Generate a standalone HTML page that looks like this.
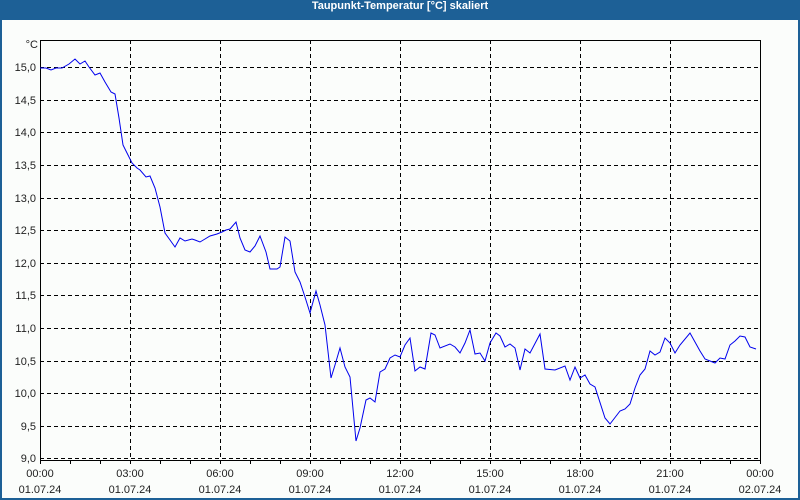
<!DOCTYPE html>
<html><head><meta charset="utf-8"><style>
html,body{margin:0;padding:0;width:800px;height:500px;overflow:hidden;background:#1d6096}
#f{position:absolute;left:2px;top:20px;width:796px;height:478px;background:#fbfdfb}
#t{position:absolute;left:0;top:0;width:800px;height:20px;line-height:18px;text-align:center;color:#fff;font:bold 11px "Liberation Sans",sans-serif}
svg{position:absolute;left:0;top:0}
text{font-family:"Liberation Sans",sans-serif;font-size:11px;fill:#222}
</style></head><body>
<div id="t">Taupunkt-Temperatur [°C] skaliert</div>
<div id="f"></div>
<svg width="800" height="500" viewBox="0 0 800 500">
<g stroke="#000" stroke-dasharray="4,3" stroke-width="1" shape-rendering="crispEdges">
<line x1="40" x2="760" y1="67.5" y2="67.5"/><line x1="40" x2="760" y1="100.5" y2="100.5"/>
<line x1="40" x2="760" y1="132.5" y2="132.5"/><line x1="40" x2="760" y1="165.5" y2="165.5"/>
<line x1="40" x2="760" y1="198.5" y2="198.5"/><line x1="40" x2="760" y1="230.5" y2="230.5"/>
<line x1="40" x2="760" y1="263.5" y2="263.5"/><line x1="40" x2="760" y1="295.5" y2="295.5"/>
<line x1="40" x2="760" y1="328.5" y2="328.5"/><line x1="40" x2="760" y1="361.5" y2="361.5"/>
<line x1="40" x2="760" y1="393.5" y2="393.5"/><line x1="40" x2="760" y1="426.5" y2="426.5"/>
<line x1="40" x2="760" y1="458.5" y2="458.5"/>
<line y1="40" y2="460" x1="130.5" x2="130.5"/><line y1="40" y2="460" x1="220.5" x2="220.5"/>
<line y1="40" y2="460" x1="310.5" x2="310.5"/><line y1="40" y2="460" x1="400.5" x2="400.5"/>
<line y1="40" y2="460" x1="490.5" x2="490.5"/><line y1="40" y2="460" x1="580.5" x2="580.5"/>
<line y1="40" y2="460" x1="670.5" x2="670.5"/>
</g>
<g stroke="#000" stroke-width="1" fill="none" shape-rendering="crispEdges">
<rect x="40.5" y="40.5" width="720" height="420"/>
<path d="M40.5 460v4M70.5 460v4M100.5 460v4M130.5 460v4M160.5 460v4M190.5 460v4M220.5 460v4M250.5 460v4M280.5 460v4M310.5 460v4M340.5 460v4M370.5 460v4M400.5 460v4M430.5 460v4M460.5 460v4M490.5 460v4M520.5 460v4M550.5 460v4M580.5 460v4M610.5 460v4M640.5 460v4M670.5 460v4M700.5 460v4M730.5 460v4M760.5 460v4"/>
</g>
<polyline fill="none" stroke="#0000ee" stroke-width="1" points="40,68 46,68 51,70 56,68 62,68 69,64 75,59 80,64 85,61 89,67 95,75 100,73 105,82 111,92 115,94 119,118 123,145 127,153 132,163 137,168 140,170 146,177 150,176 155,188 160,207 165,233 170,240 175,247 180,238 185,241 192,239 195,240 200,242 205,239 210,236 217,234 222,232 226,230 230,229 236,222 240,238 245,250 250,252 255,246 260,236 266,252 270,269 277,269 280,267 285,237 290,241 295,272 300,282 305,297 310,313 316,291 320,305 325,325 331,378 335,365 340,348 345,367 350,377 356,441 360,428 366,400 370,398 375,402 380,372 385,369 390,358 395,355 400,357 405,345 410,338 415,371 420,367 425,369 431,333 435,335 440,348 450,344 455,347 460,353 465,343 470,330 475,354 480,353 485,361 490,343 496,333 500,336 505,347 510,344 515,348 520,370 525,349 530,353 540,334 545,369 555,370 565,366 570,380 575,367 580,378 585,375 590,384 595,387 605,418 610,424 620,411 625,409 630,404 635,388 640,375 645,369 650,351 655,355 660,352 665,338 670,343 675,353 680,345 690,333 695,342 700,351 705,359 710,361 715,363 720,358 725,359 730,345 735,341 740,336 745,337 750,347 756,349"/>
<g text-anchor="end">
<text x="38" y="48">°C</text>
<text x="36" y="71">15,0</text><text x="36" y="104">14,5</text><text x="36" y="136">14,0</text>
<text x="36" y="169">13,5</text><text x="36" y="202">13,0</text><text x="36" y="234">12,5</text>
<text x="36" y="267">12,0</text><text x="36" y="299">11,5</text><text x="36" y="332">11,0</text>
<text x="36" y="365">10,5</text><text x="36" y="397">10,0</text><text x="36" y="430">9,5</text>
<text x="36" y="462">9,0</text>
</g>
<g text-anchor="middle">
<text x="40" y="477">00:00</text><text x="130" y="477">03:00</text><text x="220" y="477">06:00</text>
<text x="310" y="477">09:00</text><text x="400" y="477">12:00</text><text x="490" y="477">15:00</text>
<text x="580" y="477">18:00</text><text x="670" y="477">21:00</text><text x="760" y="477">00:00</text>
<text x="40" y="493">01.07.24</text><text x="130" y="493">01.07.24</text><text x="220" y="493">01.07.24</text>
<text x="310" y="493">01.07.24</text><text x="400" y="493">01.07.24</text><text x="490" y="493">01.07.24</text>
<text x="580" y="493">01.07.24</text><text x="670" y="493">01.07.24</text><text x="760" y="493">02.07.24</text>
</g>
</svg>
</body></html>
